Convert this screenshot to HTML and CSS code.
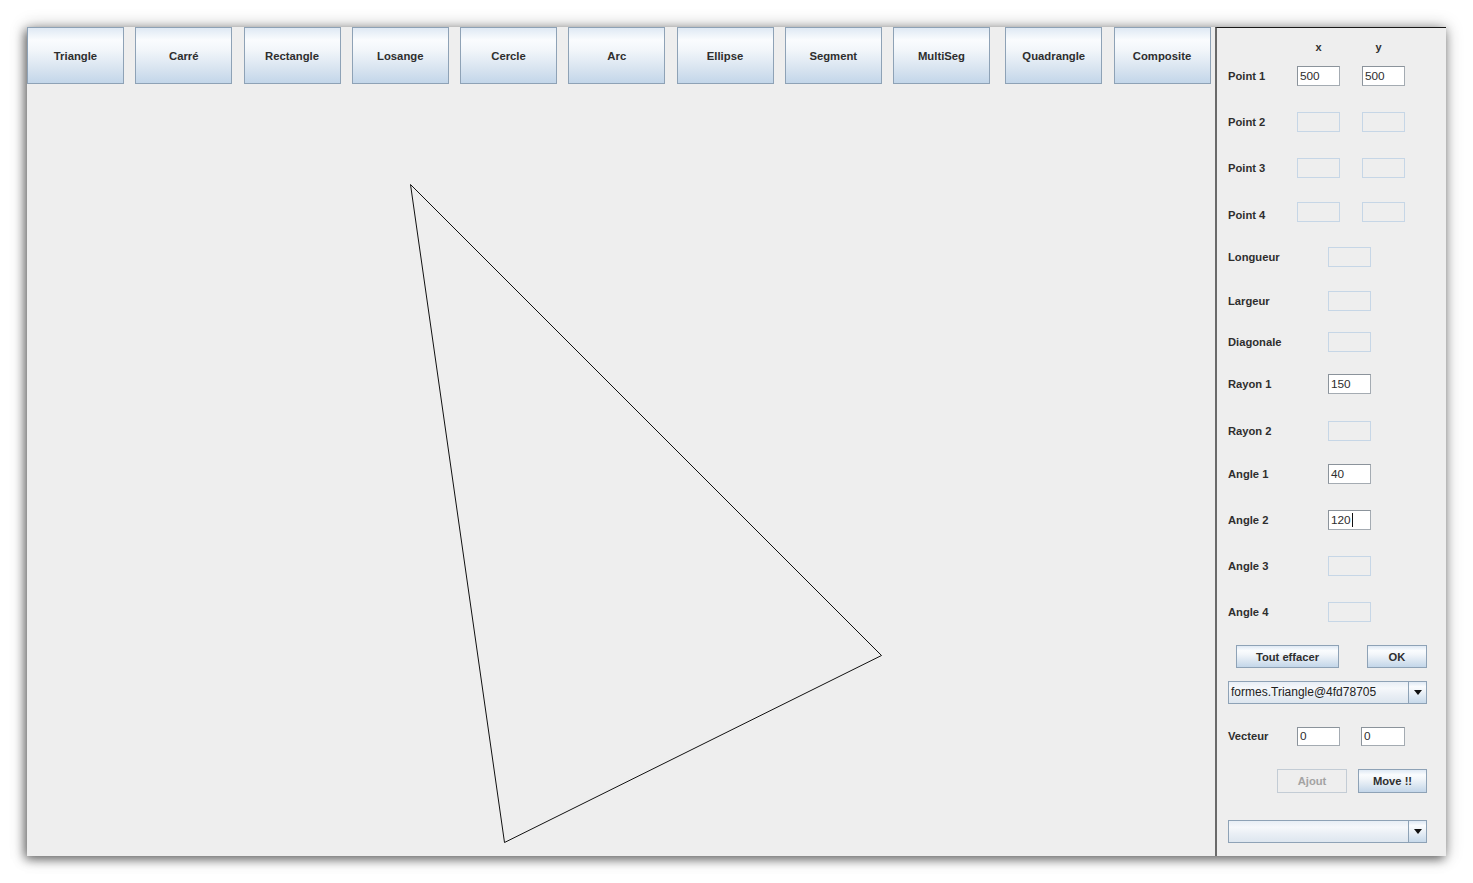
FILE: index.html
```html
<!DOCTYPE html>
<html lang="fr">
<head>
<meta charset="utf-8">
<title>Formes</title>
<link rel="stylesheet" href="styles.css">
</head>
<body>
<div class="window">
  <div class="main">
    <div class="toolbar">
      <div class="btn tool">Triangle</div>
      <div class="btn tool">Carré</div>
      <div class="btn tool">Rectangle</div>
      <div class="btn tool">Losange</div>
      <div class="btn tool">Cercle</div>
      <div class="btn tool">Arc</div>
      <div class="btn tool">Ellipse</div>
      <div class="btn tool">Segment</div>
      <div class="btn tool">MultiSeg</div>
      <div class="btn tool tool-wide-gap">Quadrangle</div>
      <div class="btn tool">Composite</div>
    </div>
    <div class="canvas">
      <svg class="drawing" width="1188" height="772" viewBox="0 0 1188 772" xmlns="http://www.w3.org/2000/svg">
        <polygon points="383.5,100.5 854.5,571.5 477.5,758.5" fill="none" stroke="#111" stroke-width="1"/>
      </svg>
    </div>
  </div>
  <div class="panel">
    <div class="row header"><span class="hx">x</span><span class="hy">y</span></div>
    <div class="row"><span class="lbl lbl-pt">Point 1</span><div class="field on">500</div><div class="field on second">500</div></div>
    <div class="row"><span class="lbl lbl-pt">Point 2</span><div class="field off"></div><div class="field off second"></div></div>
    <div class="row"><span class="lbl lbl-pt">Point 3</span><div class="field off"></div><div class="field off second"></div></div>
    <div class="row"><span class="lbl lbl-pt lbl-low">Point 4</span><div class="field off"></div><div class="field off second"></div></div>
    <div class="row"><span class="lbl lbl-single">Longueur</span><div class="field off"></div></div>
    <div class="row"><span class="lbl lbl-single">Largeur</span><div class="field off"></div></div>
    <div class="row"><span class="lbl lbl-single">Diagonale</span><div class="field off"></div></div>
    <div class="row"><span class="lbl lbl-single">Rayon 1</span><div class="field on">150</div></div>
    <div class="row"><span class="lbl lbl-single">Rayon 2</span><div class="field off"></div></div>
    <div class="row"><span class="lbl lbl-single">Angle 1</span><div class="field on">40</div></div>
    <div class="row"><span class="lbl lbl-single">Angle 2</span><div class="field on">120<span class="caret"></span></div></div>
    <div class="row"><span class="lbl lbl-single">Angle 3</span><div class="field off"></div></div>
    <div class="row"><span class="lbl lbl-single">Angle 4</span><div class="field off"></div></div>
    <div class="row row-actions"><div class="btn small clear">Tout effacer</div><div class="btn small ok">OK</div></div>
    <div class="row row-combo"><div class="combo"><span class="combo-text">formes.Triangle@4fd78705</span><span class="combo-arrow"><span class="tri"></span></span></div></div>
    <div class="row"><span class="lbl lbl-pt">Vecteur</span><div class="field on vec">0</div><div class="field on vec second-vec">0</div></div>
    <div class="row row-move"><div class="btn small disabled ajout">Ajout</div><div class="btn small move">Move !!</div></div>
    <div class="row row-combo"><div class="combo"><span class="combo-text"></span><span class="combo-arrow"><span class="tri"></span></span></div></div>
  </div>
</div>
</body>
</html>
```

FILE: styles.css
```css
html, body {
  margin: 0;
  padding: 0;
  background: #ffffff;
}

body {
  width: 1473px;
  height: 883px;
  overflow: hidden;
  font-family: "Liberation Sans", Arial, sans-serif;
  color: #2e2e2e;
}

.window {
  margin: 27px 0 0 27px;
  width: 1419px;
  height: 829px;
  background: #eeeeee;
  display: flex;
  box-shadow: -2px 3px 10px rgba(0, 0, 0, 0.55), 0 0 16px rgba(0, 0, 0, 0.25);
}

.main {
  width: 1188px;
  display: flex;
  flex-direction: column;
  flex: none;
}

.toolbar {
  display: flex;
  gap: 11.25px;
  height: 57px;
  flex: none;
}

.btn {
  box-sizing: border-box;
  display: flex;
  align-items: center;
  justify-content: center;
  border: 1px solid #8ea2b6;
  background: linear-gradient(to bottom, #dfe9f4 0%, #fafcfe 22%, #f2f6fa 40%, #dbe6f1 70%, #c3d6e9 100%);
  font-weight: bold;
  color: #2e2e2e;
  white-space: nowrap;
}

.tool {
  width: 97px;
  height: 57px;
  font-size: 11.3px;
  flex: none;
}

.tool-wide-gap {
  margin-left: 4px;
}

.canvas {
  flex: 1;
}

.drawing {
  display: block;
}

.panel {
  box-sizing: border-box;
  width: 231px;
  flex: none;
  border-left: 2px solid #6a6a6a;
  border-top: 1px solid #1a1a1a;
  padding-left: 11px;
  display: grid;
  grid-template-rows: 26px 32px 46px 46px 44px 45px 44px 41px 42px 47px 43px 46px 46px 46px 46px 36px 42px 47px 50px;
  align-content: start;
}

.row {
  display: flex;
  align-items: center;
  align-self: end;
  height: 20px;
}

.header {
  height: 14px;
  padding-left: 69px;
  font-size: 11px;
  font-weight: bold;
}

.hx, .hy {
  width: 43px;
  text-align: center;
  line-height: 14px;
}

.hy {
  margin-left: 17px;
}

.lbl {
  font-size: 11.2px;
  font-weight: bold;
  color: #2e2e2e;
  flex: none;
  white-space: nowrap;
}

.lbl-pt {
  width: 69px;
}

.lbl-low {
  align-self: flex-end;
  line-height: 14px;
}

.lbl-single {
  width: 100px;
}

.field {
  box-sizing: border-box;
  width: 43px;
  height: 20px;
  font-size: 11.8px;
  line-height: 18px;
  padding-left: 2px;
  color: #2e2e2e;
  flex: none;
  display: flex;
  align-items: center;
}

.field.on {
  background: #ffffff;
  border: 1px solid #a4abb2;
  border-top-color: #8b939b;
  border-left-color: #8b939b;
}

.field.off {
  background: transparent;
  border: 1px solid #c6d6e6;
}

.second {
  margin-left: 22px;
}

.vec {
  height: 19px;
}

.second-vec {
  width: 44px;
  margin-left: 21px;
}

.caret {
  display: inline-block;
  width: 1px;
  height: 14px;
  background: #111111;
  margin-left: 1px;
}

.row-actions {
  height: 23px;
  padding-left: 8px;
}

.small {
  height: 23px;
  font-size: 11.2px;
}

.clear {
  width: 103px;
}

.ok {
  width: 60px;
  margin-left: 28px;
}

.row-move {
  height: 24px;
  padding-left: 49px;
}

.row-move .small {
  height: 24px;
}

.ajout {
  width: 70px;
}

.move {
  width: 69px;
  margin-left: 11px;
}

.disabled {
  color: #a3a3a3;
  border-color: #c3ccd5;
  background: #eeeeee;
}

.row-combo {
  height: 23px;
}

.combo {
  box-sizing: border-box;
  width: 199px;
  height: 23px;
  border: 1px solid #8ea2b6;
  display: flex;
  background: linear-gradient(to bottom, #e8eef5 0%, #f6f8fb 30%, #eaeff5 60%, #dde6ef 100%);
  flex: none;
}

.combo-text {
  flex: 1;
  font-size: 12px;
  line-height: 21px;
  padding-left: 2px;
  color: #222222;
  white-space: nowrap;
  overflow: hidden;
}

.combo-arrow {
  box-sizing: border-box;
  width: 18px;
  border-left: 1px solid #8ea2b6;
  background: linear-gradient(to bottom, #dfe9f4 0%, #fafcfe 22%, #eef3f8 45%, #c7d9ea 100%);
  display: flex;
  align-items: center;
  justify-content: center;
}

.tri {
  width: 0;
  height: 0;
  border-left: 4px solid transparent;
  border-right: 4px solid transparent;
  border-top: 5px solid #111111;
}
```
